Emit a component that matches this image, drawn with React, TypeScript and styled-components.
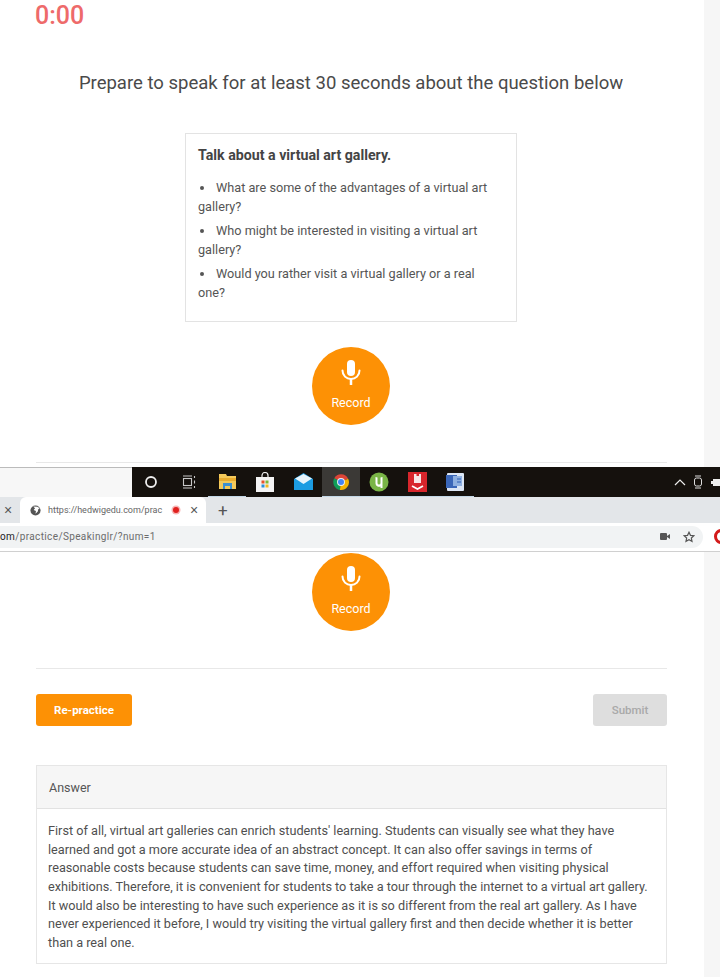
import styled, { createGlobalStyle } from 'styled-components';

const GlobalStyle = createGlobalStyle`
  html, body {
    margin: 0;
    padding: 0;
    background: #fff;
  }
  body {
    font-family: Roboto, "Liberation Sans", sans-serif;
    color: #4a4a4a;
  }
`;

const Mic = () => (
  <svg width="24" height="28" viewBox="0 0 24 28" fill="none">
    <rect x="8" y="1" width="8" height="16" rx="4" fill="#fff" />
    <path d="M3.5 11.5c0 5 3.8 8.5 8.5 8.500s8.500-3.500 8.500-8.500" stroke="#fff" strokeWidth="2" strokeLinecap="round" />
    <path d="M12 20v6" stroke="#fff" strokeWidth="2.500" />
  </svg>
);

const RecordButton = () => (
  <RecordCircle>
    <Mic />
    <RecordLabel>Record</RecordLabel>
  </RecordCircle>
);

const TaskIcons = () => (
  <>
    <TaskSlot>
      <svg width="16" height="16" viewBox="0 0 16 16" fill="none">
        <circle cx="8" cy="8" r="5" stroke="#eee" strokeWidth="1.800" />
      </svg>
    </TaskSlot>
    <TaskSlot>
      <svg width="14" height="14" viewBox="0 0 14 14" fill="none" stroke="#c8c8c8" strokeWidth="1.100">
        <rect x="1.500" y="3.500" width="8" height="7" />
        <path d="M1 1h9M1 13h9M12.500 1v2M12.500 5.500v3M12.500 11v2" />
      </svg>
    </TaskSlot>
    <TaskSlot $running>
      <svg width="17" height="15" viewBox="0 0 17 15">
        <path d="M0 0h7l1 2h9v13H0z" fill="#f4c95a" />
        <rect x="0" y="4" width="17" height="3" fill="#e9ac2f" />
        <path d="M4 9h9v6h-2v-3H6v3H4z" fill="#3d8fd1" />
      </svg>
    </TaskSlot>
    <TaskSlot>
      <svg width="18" height="20" viewBox="0 0 18 20">
        <path d="M6 6V3.500a3 3 0 0 1 6 0V6" stroke="#eee" strokeWidth="1.200" fill="none" />
        <rect x="0" y="5" width="18" height="15" fill="#f4f4f4" />
        <rect x="5.500" y="8.500" width="3" height="3" fill="#e8532b" />
        <rect x="9.500" y="8.500" width="3" height="3" fill="#7db93a" />
        <rect x="5.500" y="12.500" width="3" height="3" fill="#2d8fdc" />
        <rect x="9.500" y="12.500" width="3" height="3" fill="#f3b81f" />
      </svg>
    </TaskSlot>
    <TaskSlot>
      <svg width="19" height="17" viewBox="0 0 19 17">
        <path d="M0 6 9.500 0 19 6v11H0z" fill="#1c9ce2" />
        <path d="M1 5.500 9.500 1 18 5.500 9.500 11z" fill="#e8f4fb" />
      </svg>
    </TaskSlot>
    <TaskSlot $active $running>
      <svg width="18" height="18" viewBox="0 0 48 48">
        <path d="M24 24 6 14A21 21 0 0 1 43 15z" fill="#dc4437" />
        <path d="M24 24 6 14A21 21 0 0 0 21 45z" fill="#0f9d58" />
        <path d="M24 24 43 15A21 21 0 0 1 21 45z" fill="#f4b400" />
        <circle cx="24" cy="24" r="10.500" fill="#f1f1f1" />
        <circle cx="24" cy="24" r="8" fill="#4285f4" />
      </svg>
    </TaskSlot>
    <TaskSlot $running>
      <svg width="20" height="20" viewBox="0 0 20 20">
        <circle cx="10" cy="10" r="9.500" fill="#7ab547" />
        <path d="M6.500 5l2 .5v5.500a1.500 1.500 0 0 0 3 0V5.500l2-.5v11h-2v-1.500a3.500 3.500 0 0 1-5-3z" fill="#fff" />
      </svg>
    </TaskSlot>
    <TaskSlot $running>
      <svg width="19" height="20" viewBox="0 0 19 20">
        <rect width="19" height="20" fill="#d8262c" />
        <path d="M6 2h2.500v2H11V2h2v9H6z" fill="#f7e6e6" />
        <path d="M4 14l5.500 3L15 14" stroke="#fff" strokeWidth="1.800" fill="none" />
      </svg>
    </TaskSlot>
    <TaskSlot $running>
      <svg width="18" height="18" viewBox="0 0 18 18">
        <rect x="1" width="17" height="18" rx="1" fill="#dce6f5" />
        <rect x="0" y="2" width="11" height="13" fill="#3a66b8" />
        <rect x="7" y="3" width="9" height="10" fill="#8fb0e0" />
        <path d="M11 6h4M11 9h4" stroke="#2f5fb3" strokeWidth="1.200" />
      </svg>
    </TaskSlot>
  </>
);

const App = () => (
  <Page>
    <GlobalStyle />
    <TopSection>
      <Timer>0:00</Timer>
      <Prompt>Prepare to speak for at least 30 seconds about the question below</Prompt>
      <QuestionCard>
        <QuestionTitle>Talk about a virtual art gallery.</QuestionTitle>
        <QuestionItem>What are some of the advantages of a virtual art gallery?</QuestionItem>
        <QuestionItem>Who might be interested in visiting a virtual art gallery?</QuestionItem>
        <QuestionItem>Would you rather visit a virtual gallery or a real one?</QuestionItem>
      </QuestionCard>
      <RecordButton />
      <Divider $top={37} />
    </TopSection>

    <Taskbar>
      <TaskbarBlank />
      <TaskbarDark>
        <TaskIcons />
        <Tray>
          <svg width="12" height="8" viewBox="0 0 12 8" fill="none" stroke="#eee" strokeWidth="1.200">
            <path d="M1 7l5-5 5 5" />
          </svg>
          <svg width="11" height="14" viewBox="0 0 11 14" fill="none" stroke="#ddd" strokeWidth="1">
            <rect x="1.500" y="3" width="7" height="8" rx="2" />
            <path d="M2 1h6M2 13h6" />
          </svg>
          <svg width="12" height="9" viewBox="0 0 12 9">
            <rect x="2" y="1" width="10" height="7" fill="#eee" />
            <rect x="0" y="3" width="2" height="3" fill="#eee" />
          </svg>
        </Tray>
      </TaskbarDark>
    </Taskbar>

    <TabStrip>
      <TabClose>×</TabClose>
      <Tab>
        <svg width="11" height="11" viewBox="0 0 24 24">
          <circle cx="12" cy="12" r="11" fill="#555" />
          <path d="M7 3l4 4-3 4 5 2-1 6 5-5 1-5 3-2-5-3z" fill="#fff" />
        </svg>
        <TabTitle>https://hedwigedu.com/prac</TabTitle>
        <RecDot />
        <TabClose>×</TabClose>
      </Tab>
      <NewTab>+</NewTab>
    </TabStrip>

    <AddressRow>
      <Omnibox>
        <UrlText>
          <UrlHost>om</UrlHost>/practice/Speakinglr/?num=1
        </UrlText>
        <OmniIcons>
          <svg width="10" height="7" viewBox="0 0 10 7">
            <rect width="7" height="7" rx="1" fill="#555" />
            <path d="M7 3l3-2v5L7 4z" fill="#555" />
          </svg>
          <svg width="12" height="12" viewBox="0 0 24 24" fill="none" stroke="#555" strokeWidth="2.400">
            <path d="M12 2.500l2.900 6.200 6.800.8-5 4.600 1.300 6.700-6-3.300-6 3.300 1.300-6.700-5-4.600 6.800-.8z" />
          </svg>
        </OmniIcons>
      </Omnibox>
      <OperaMark />
    </AddressRow>

    <BottomSection>
      <RecordButton />
      <Divider $top={37} />
      <Actions>
        <RePractice>Re-practice</RePractice>
        <Submit>Submit</Submit>
      </Actions>
      <AnswerCard>
        <AnswerHeader>Answer</AnswerHeader>
        <AnswerBody>
          First of all, virtual art galleries can enrich students' learning. Students can visually see what they have
          learned and got a more accurate idea of an abstract concept. It can also offer savings in terms of
          reasonable costs because students can save time, money, and effort required when visiting physical
          exhibitions. Therefore, it is convenient for students to take a tour through the internet to a virtual art gallery.
          It would also be interesting to have such experience as it is so different from the real art gallery. As I have
          never experienced it before, I would try visiting the virtual gallery first and then decide whether it is better
          than a real one.
        </AnswerBody>
      </AnswerCard>
    </BottomSection>
  </Page>
);

export default App;

const Page = styled.div`
  width: 720px;
  height: 977px;
  overflow: hidden;
  display: flex;
  flex-direction: column;
`;

const TopSection = styled.section`
  height: 467px;
  flex: none;
  box-sizing: border-box;
  width: 704px;
  display: flex;
  flex-direction: column;
  align-items: center;
  box-shadow: 16px 0 0 #f6f6f6;
`;

const Timer = styled.div`
  align-self: flex-start;
  margin: 0 0 0 35px;
  height: 30px;
  line-height: 31px;
  font-size: 25px;
  font-weight: 500;
  color: #ee6a6a;
`;

const Prompt = styled.h2`
  margin: 41px 2px 0 0;
  font-size: 18.530px;
  line-height: 24px;
  font-weight: 400;
  color: #4a4a4a;
  white-space: nowrap;
`;

const QuestionCard = styled.div`
  box-sizing: border-box;
  margin: 38px 2px 0 0;
  width: 332px;
  height: 189px;
  padding: 13px 12px;
  border: 1px solid #e3e3e3;
  font-size: 12.700px;
  line-height: 19px;
  color: #555;
`;

const QuestionTitle = styled.div`
  font-size: 14.200px;
  line-height: 17px;
  font-weight: 700;
  color: #444;
  margin-bottom: 14px;
`;

const QuestionItem = styled.div`
  margin-bottom: 5px;
  padding-right: 10px;
  &::before {
    content: '';
    display: inline-block;
    width: 4px;
    height: 4px;
    border-radius: 50%;
    background: #555;
    margin: 0 12px 2px 2px;
    vertical-align: middle;
  }
`;

const RecordCircle = styled.div`
  box-sizing: border-box;
  width: 78px;
  height: 78px;
  flex: none;
  border-radius: 50%;
  background: #fd9105;
  display: flex;
  flex-direction: column;
  align-items: center;
  padding-top: 12px;
  margin: 25px 2px 0 0;
`;

const RecordLabel = styled.div`
  color: #fff;
  font-size: 12.500px;
  line-height: 14px;
  margin-top: 9px;
`;

const Divider = styled.hr<{ $top: number }>`
  align-self: stretch;
  width: 631px;
  margin: ${({ $top }) => $top}px 0 0 36px;
  border: 0;
  border-top: 1px solid #e8e8e8;
`;

const Taskbar = styled.div`
  height: 30px;
  flex: none;
  display: flex;
`;

const TaskbarBlank = styled.div`
  width: 132px;
  background: #f7f7f7;
  border-top: 1px solid #bbb;
  box-sizing: border-box;
`;

const TaskbarDark = styled.div`
  flex: 1;
  background: #15110d;
  display: flex;
  align-items: center;
  overflow: hidden;
`;

const TaskSlot = styled.div<{ $active?: boolean; $running?: boolean }>`
  box-sizing: border-box;
  width: 38px;
  height: 30px;
  flex: none;
  display: flex;
  align-items: center;
  justify-content: center;
  background: ${({ $active }) => ($active ? '#3b3936' : 'transparent')};
  border-bottom: 1px solid ${({ $running }) => ($running ? '#c3d7e6' : 'transparent')};
`;

const Tray = styled.div`
  margin-left: auto;
  display: flex;
  align-items: center;
  gap: 7px;
  margin-right: -3px;
`;

const TabStrip = styled.div`
  height: 26px;
  flex: none;
  background: #e3e6e9;
  display: flex;
  align-items: center;
`;

const Tab = styled.div`
  box-sizing: border-box;
  margin-left: 4px;
  height: 26px;
  width: 186px;
  background: #fff;
  border-radius: 6px 6px 0 0;
  display: flex;
  align-items: center;
  padding: 0 4px 0 10px;
  gap: 7px;
`;

const TabTitle = styled.div`
  font-size: 9px;
  color: #666;
  width: 118px;
  flex: none;
  white-space: nowrap;
  overflow: hidden;
`;

const TabClose = styled.span`
  font-family: "Liberation Sans", sans-serif;
  font-size: 14px;
  width: 16px;
  flex: none;
  text-align: center;
  color: #555;
`;

const RecDot = styled.span`
  width: 6px;
  height: 6px;
  flex: none;
  border-radius: 50%;
  background: #e0201e;
  box-shadow: 0 0 0 1.500px #f7b4b4;
`;

const NewTab = styled.span`
  margin-left: 12px;
  font-size: 17px;
  color: #555;
`;

const AddressRow = styled.div`
  height: 29px;
  flex: none;
  box-sizing: border-box;
  border-bottom: 1px solid #d0d0d0;
  display: flex;
  align-items: center;
  padding-bottom: 1px;
`;

const Omnibox = styled.div`
  width: 703px;
  height: 22px;
  flex: none;
  background: #f1f3f4;
  border-radius: 0 11px 11px 0;
  display: flex;
  align-items: center;
  justify-content: space-between;
`;

const UrlText = styled.div`
  font-size: 10px;
  color: #6b6b6b;
  letter-spacing: 0.370px;
`;

const UrlHost = styled.span`
  color: #222;
`;

const OmniIcons = styled.div`
  display: flex;
  align-items: center;
  gap: 13px;
  padding-right: 8px;
`;

const OperaMark = styled.div`
  box-sizing: border-box;
  width: 14px;
  height: 15px;
  margin-left: 11px;
  border: 3px solid #d31a1a;
  border-radius: 50%;
  flex: none;
`;

const BottomSection = styled.section`
  flex: 1;
  width: 704px;
  box-shadow: 16px 0 0 #f6f6f6;
  display: flex;
  flex-direction: column;
  align-items: center;
  & > ${RecordCircle} {
    margin-top: 1px;
  }
`;

const Actions = styled.div`
  align-self: stretch;
  width: 631px;
  margin: 25px 0 0 36px;
  display: flex;
  justify-content: space-between;
`;

const RePractice = styled.button`
  width: 96px;
  height: 32px;
  border: 0;
  border-radius: 3px;
  background: #fd9105;
  color: #fff;
  font: 700 11.500px Roboto, sans-serif;
  padding-bottom: 2px;
`;

const Submit = styled.button`
  width: 74px;
  height: 32px;
  border: 0;
  border-radius: 3px;
  background: #dedede;
  color: #a9a9a9;
  font: 500 11.500px Roboto, sans-serif;
  padding-bottom: 2px;
`;

const AnswerCard = styled.div`
  box-sizing: border-box;
  align-self: stretch;
  width: 631px;
  height: 199px;
  margin: 39px 0 0 36px;
  border: 1px solid #e6e6e6;
`;

const AnswerHeader = styled.div`
  height: 43px;
  box-sizing: border-box;
  padding-left: 12px;
  line-height: 43px;
  font-size: 12.500px;
  background: #f6f6f6;
  border-bottom: 1px solid #e2e2e2;
  color: #555;
`;

const AnswerBody = styled.div`
  padding: 13px 11px 0;
  font-size: 12.680px;
  line-height: 18.650px;
  color: #4f4f4f;
`;
